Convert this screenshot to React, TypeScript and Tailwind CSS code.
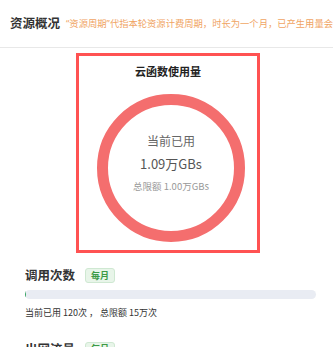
import React from 'react'

const font = { fontFamily: '"Noto Sans CJK SC", "Noto Sans", sans-serif' }
const mixed = { fontFamily: '"Noto Sans", "Noto Sans CJK SC", sans-serif' }

function UsageRing() {
  return (
    <div className="relative w-[148px] h-[148px]">
      <svg width="148" height="148" viewBox="0 0 148 148" className="absolute inset-0">
        <circle cx="74" cy="74" r="68.5" fill="none" stroke="#f46e6e" strokeWidth="11" />
      </svg>
      <div className="absolute inset-0 flex flex-col items-center justify-center">
        <div className="text-[12px] leading-none text-[#666] mt-[-10px]">当前已用</div>
        <div className="text-[13px] leading-none text-[#555] mt-[10px]">1.09万GBs</div>
        <div className="text-[9.5px] leading-none text-[#999] mt-[12px]">总限额 1.00万GBs</div>
      </div>
    </div>
  )
}

function Badge() {
  return (
    <span className="px-[5px] h-[15px] flex items-center rounded-[3px] bg-[#e8f5e9] border border-[#cfe8d2] text-[9px] font-bold text-[#3d9a47]">
      每月
    </span>
  )
}

export default function App() {
  return (
    <div className="w-[333px] h-[347px] overflow-hidden bg-white" style={font}>
      <div className="h-[48px] flex items-center pl-[10px] border-b border-[#e8e8e8] whitespace-nowrap">
        <span className="text-[12.5px] font-bold text-[#333]">资源概况</span>
        <span className="ml-[6px] text-[9.3px] text-[#f0a463]" style={mixed}>
          “资源周期”代指本轮资源计费周期，时长为一个月，已产生用量会在
        </span>
      </div>

      <div className="ml-[76px] mt-[5px] w-[184px] h-[200px] border-[3px] border-[#ff5252] flex flex-col items-center">
        <div className="mt-[10px] text-[11px] font-bold text-[#222] leading-none">云函数使用量</div>
        <div className="mt-[17px] pl-[6px]">
          <UsageRing />
        </div>
      </div>

      <div className="px-[25px] pt-[13px]">
        <div className="flex items-center gap-[10px]">
          <span className="text-[12.5px] font-bold text-[#333]">调用次数</span>
          <Badge />
        </div>
        <div className="mt-[5px] h-[9px] w-[291px] rounded-full bg-[#e9ecf3] overflow-hidden">
          <div className="h-full w-[1px] bg-[#3aa565]" />
        </div>
        <div className="mt-[9px] text-[9px] text-[#333] leading-none">当前已用 120次 ， 总限额 15万次</div>

        <div className="mt-[23px] flex items-center gap-[10px]">
          <span className="text-[12.5px] font-bold text-[#333]">出网流量</span>
          <Badge />
        </div>
      </div>
    </div>
  )
}
